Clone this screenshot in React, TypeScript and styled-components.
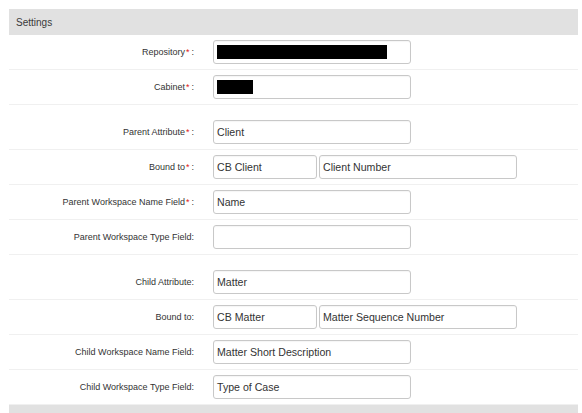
import * as React from 'react';
import styled, { createGlobalStyle } from 'styled-components';

const GlobalStyle = createGlobalStyle`
    body {
        margin: 0;
        background: #ffffff;
        font-family: "Liberation Sans", Arial, sans-serif;
        color: #333333;
    }
`;

const Panel = styled.div`
    margin: 9px 4px 0 9px;
`;

const SectionHeader = styled.div`
    height: 26px;
    display: flex;
    align-items: center;
    padding-left: 7px;
    background-color: #e1e1e1;
    font-size: 10px;
    color: #3a3a3a;
`;

const Group = styled.div`
    & + & {
        margin-top: 10px;
    }
`;

const Row = styled.div`
    display: grid;
    grid-template-columns: 185px 1fr;
    column-gap: 19px;
    align-items: center;
    padding: 5px 0;
    border-bottom: 1px solid #f0f0f0;
`;

const Label = styled.div`
    text-align: right;
    font-size: 9px;
    color: #333333;
`;

const Required = styled.span`
    color: #e02020;
    margin: 0 2px 0 1px;
`;

const Fields = styled.div`
    display: flex;
    gap: 2px;
`;

const Field = styled.div<{ $width: number }>`
    box-sizing: border-box;
    width: ${(p) => p.$width}px;
    height: 24px;
    display: flex;
    align-items: center;
    padding: 0 3px;
    border: 1px solid #c8c8c8;
    border-radius: 3px;
    background: #ffffff;
    box-shadow: inset 0 1px 1px rgba(0, 0, 0, 0.04);
    font-size: 10.6px;
    color: #333333;
    white-space: nowrap;
    overflow: hidden;
`;

const Redacted = styled.span<{ $width: number }>`
    display: block;
    width: ${(p) => p.$width}px;
    height: 14px;
    background: #000000;
`;

type FieldDef = { value?: string; redact?: number; width?: number };

type RowDef = {
    label: string;
    required?: boolean;
    fields: FieldDef[];
};

const groups: RowDef[][] = [
    [
        { label: 'Repository', required: true, fields: [{ redact: 170 }] },
        { label: 'Cabinet', required: true, fields: [{ redact: 36 }] },
    ],
    [
        { label: 'Parent Attribute', required: true, fields: [{ value: 'Client' }] },
        {
            label: 'Bound to',
            required: true,
            fields: [
                { value: 'CB Client', width: 104 },
                { value: 'Client Number', width: 198 },
            ],
        },
        { label: 'Parent Workspace Name Field', required: true, fields: [{ value: 'Name' }] },
        { label: 'Parent Workspace Type Field', fields: [{ value: '' }] },
    ],
    [
        { label: 'Child Attribute', fields: [{ value: 'Matter' }] },
        {
            label: 'Bound to',
            fields: [
                { value: 'CB Matter', width: 104 },
                { value: 'Matter Sequence Number', width: 198 },
            ],
        },
        { label: 'Child Workspace Name Field', fields: [{ value: 'Matter Short Description' }] },
        { label: 'Child Workspace Type Field', fields: [{ value: 'Type of Case' }] },
    ],
];

export default function App() {
    return (
        <>
            <GlobalStyle />
            <Panel>
                <SectionHeader>Settings</SectionHeader>
                {groups.map((rows, gi) => (
                    <Group key={gi}>
                        {rows.map((row, ri) => (
                            <Row key={ri}>
                                <Label>
                                    {row.label}
                                    {row.required ? <Required>*</Required> : null}:
                                </Label>
                                <Fields>
                                    {row.fields.map((f, fi) => (
                                        <Field key={fi} $width={f.width ?? 198}>
                                            {f.redact ? <Redacted $width={f.redact} /> : f.value}
                                        </Field>
                                    ))}
                                </Fields>
                            </Row>
                        ))}
                    </Group>
                ))}
                <SectionHeader />
            </Panel>
        </>
    );
}
